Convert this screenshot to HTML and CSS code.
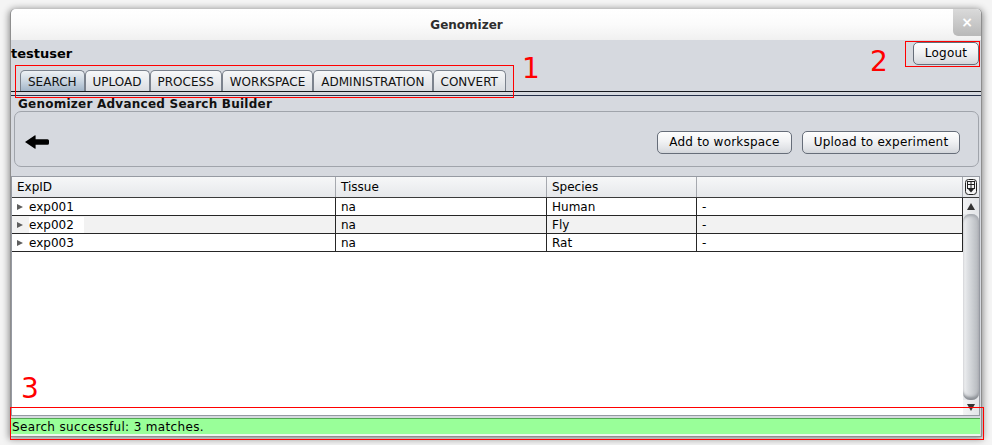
FILE: index.html
```html
<!DOCTYPE html>
<html>
<head>
<meta charset="utf-8">
<title>Genomizer</title>
<link rel="stylesheet" href="styles.css">
</head>
<body>
<div class="page">
  <div class="window">
    <div class="titlebar">
      <div class="title-wrap"><span class="title">Genomizer</span></div>
      <div class="close">×</div>
    </div>
    <div class="content">
      <div class="toprow">
        <span class="user">testuser</span>
        <button class="btn logout">Logout</button>
      </div>
      <div class="tabs">
        <div class="tab active">SEARCH</div>
        <div class="tab">UPLOAD</div>
        <div class="tab">PROCESS</div>
        <div class="tab">WORKSPACE</div>
        <div class="tab">ADMINISTRATION</div>
        <div class="tab">CONVERT</div>
      </div>
      <div class="tabline"></div>
      <div class="section-title">Genomizer Advanced Search Builder</div>
      <div class="panel">
        <svg class="back" width="24" height="14" viewBox="0 0 24 14">
          <path d="M0 7 L10 0.3 Q10.6 0 10.6 0.8 L10.6 4.3 L22.5 4.3 Q24 4.3 24 5.8 L24 8.2 Q24 9.7 22.5 9.7 L10.6 9.7 L10.6 13.2 Q10.6 14 10 13.7 Z" fill="#000"/>
        </svg>
        <div class="actions">
          <button class="btn add">Add to workspace</button>
          <button class="btn upload">Upload to experiment</button>
        </div>
      </div>
      <div class="scrollpane">
        <div class="table">
          <div class="row head">
            <div class="cell c1">ExpID</div>
            <div class="cell c2">Tissue</div>
            <div class="cell c3">Species</div>
            <div class="cell c4"></div>
          </div>
          <div class="row">
            <div class="cell c1"><span class="tri"></span><span class="id">exp001</span></div>
            <div class="cell c2">na</div>
            <div class="cell c3">Human</div>
            <div class="cell c4">-</div>
          </div>
          <div class="row alt">
            <div class="cell c1"><span class="tri"></span><span class="id hl">exp002</span></div>
            <div class="cell c2">na</div>
            <div class="cell c3">Fly</div>
            <div class="cell c4">-</div>
          </div>
          <div class="row">
            <div class="cell c1"><span class="tri"></span><span class="id">exp003</span></div>
            <div class="cell c2">na</div>
            <div class="cell c3">Rat</div>
            <div class="cell c4">-</div>
          </div>
        </div>
        <div class="vscroll">
          <div class="corner">
            <svg width="12" height="16" viewBox="0 0 12 16">
              <rect x="0.5" y="0.5" width="11" height="15" rx="3" fill="#f4f4f4" stroke="#222"/>
              <rect x="2.5" y="2.5" width="7" height="7" fill="none" stroke="#222"/>
              <path d="M6 2.5 V9.5 M2.5 5.5 H9.5" stroke="#222"/>
              <path d="M3 10 H9 L6 13.5 Z" fill="#222"/>
            </svg>
          </div>
          <div class="sbtn">
            <svg width="8" height="7" viewBox="0 0 8 7"><path d="M4 0 L8 7 H0 Z" fill="#333"/></svg>
          </div>
          <div class="thumb"></div>
          <div class="sbtn">
            <svg width="8" height="7" viewBox="0 0 8 7"><path d="M0 0 H8 L4 7 Z" fill="#333"/></svg>
          </div>
        </div>
      </div>
      <div class="status">Search successful: 3 matches.</div>
    </div>

    <div class="mark mark1"></div>
    <div class="mark mark2"></div>
    <div class="mark mark3"></div>
    <div class="num num1">1</div>
    <div class="num num2">2</div>
    <div class="num num3">3</div>
  </div>
</div>
</body>
</html>
```
FILE: styles.css
```css
* { box-sizing: border-box; }

html, body {
  margin: 0;
  padding: 0;
}

body {
  width: 992px;
  height: 445px;
  overflow: hidden;
  background: #f4f4f4;
  font-family: "DejaVu Sans", "Noto Sans", sans-serif;
  font-size: 12px;
  color: #000;
}

.page {
  padding: 9px 0 0 10px;
}

.window {
  position: relative;
  width: 972px;
  height: 428px;
  display: flex;
  flex-direction: column;
  background: #d6d9df;
  border: 1px solid #8e8e8e;
  border-top: none;
  border-radius: 5px 5px 0 0;
  box-shadow: 0 1px 7px 1px rgba(0, 0, 0, 0.45);
}

/* title bar */
.titlebar {
  height: 31px;
  display: flex;
  background: linear-gradient(#ffffff, #fbfbfb 50%, #f0f0f0);
  border-radius: 5px 5px 0 0;
}

.title-wrap {
  flex: 1;
  display: flex;
  justify-content: center;
  align-items: center;
  padding-right: 31px;
}

.title {
  font-weight: bold;
  font-size: 12px;
  color: #2e2e2e;
}

.close {
  width: 28px;
  height: 27px;
  background: linear-gradient(#dadada, #c6c6c6 60%, #b8b8b8);
  border-radius: 0 5px 0 5px;
  color: #fff;
  font-weight: bold;
  font-size: 14px;
  line-height: 27px;
  text-align: center;
}

/* content */
.content {
  flex: 1;
  display: flex;
  flex-direction: column;
}

.toprow {
  height: 28px;
  display: flex;
  justify-content: space-between;
  align-items: flex-start;
}

.user {
  font-weight: bold;
  font-size: 13px;
  line-height: 16px;
  padding-top: 6px;
}

.btn {
  font-family: "DejaVu Sans", "Noto Sans", sans-serif;
  font-size: 12px;
  letter-spacing: 0.2px;
  color: #000;
  height: 23px;
  padding: 0;
  text-align: center;
  line-height: 21px;
  border: 1px solid #666d79;
  border-radius: 5px;
  background: linear-gradient(#fefefe, #f1f2f4 45%, #e0e2e6 80%, #d2d5da);
}

.logout {
  width: 66px;
  margin-top: 2px;
  margin-right: 2px;
}

.tabs {
  display: flex;
  margin: 2px 0 0 9px;
  height: 21px;
}

.tab {
  height: 21px;
  padding: 2px 7px 0;
  line-height: 19px;
  border: 1px solid #7b828d;
  border-bottom: none;
  border-radius: 5px 5px 0 0;
  background: linear-gradient(#f7f8f9, #e9ebee 50%, #d9dce1);
  color: #111;
}

.tab.active {
  background: linear-gradient(#eef1f4, #cbd6e1 50%, #a2b5c8);
}

.tabline {
  height: 5px;
  border-top: 1px solid #15181e;
  border-bottom: 1px solid #26314a;
}

.section-title {
  height: 15px;
  padding-top: 1px;
  line-height: 14px;
  font-weight: bold;
  letter-spacing: 0.24px;
  padding-left: 7px;
  color: #111;
  white-space: nowrap;
}

.panel {
  width: 965px;
  height: 56px;
  margin-left: 3px;
  border: 1px solid #a0a4ab;
  border-radius: 7px;
  display: flex;
  align-items: center;
  justify-content: space-between;
  padding: 7px 18px 1px 10px;
}

.back {
  display: block;
}

.actions {
  display: flex;
  gap: 10px;
}

.add { width: 135px; }
.upload { width: 158px; }

/* table */
.scrollpane {
  width: 969px;
  height: 240px;
  margin-top: 9px;
  border: 1px solid #969aa2;
  display: flex;
  background: #fff;
}

.table {
  width: 951px;
  display: flex;
  flex-direction: column;
}

.row {
  display: flex;
  height: 18px;
  border-bottom: 1px solid #262626;
  background: #fff;
}

.row.alt {
  background: #f2f2f2;
}

.row.head {
  height: 21px;
  border-bottom: 1px solid #3a3a3a;
  background: linear-gradient(#f6f7f8, #e6e8eb);
}

.cell {
  display: flex;
  align-items: center;
  padding-left: 5px;
  padding-top: 1px;
  line-height: 16px;
  border-right: 1px solid #262626;
  white-space: nowrap;
}

.head .cell {
  padding-top: 0;
  line-height: 19px;
  border-right: 1px solid #a6a9af;
}

.c1 { width: 324px; }
.c2 { width: 211px; }
.c3 { width: 150px; }
.c4 { width: 266px; }

.tri {
  width: 0;
  height: 0;
  border-top: 3.5px solid transparent;
  border-bottom: 3.5px solid transparent;
  border-left: 6px solid #5e5e5e;
  margin-right: 6px;
}

.id.hl {
  background: #fff;
  padding-right: 10px;
}

/* scrollbar */
.vscroll {
  width: 16px;
  display: flex;
  flex-direction: column;
  background: #e6e8eb;
}

.corner {
  height: 21px;
  border-bottom: 1px solid #3a3a3a;
  background: linear-gradient(#f6f7f8, #e6e8eb);
  display: flex;
  justify-content: center;
  align-items: center;
}

.sbtn {
  height: 16px;
  display: flex;
  justify-content: center;
  align-items: center;
  background: linear-gradient(to right, #f3f4f5, #e2e4e7);
}

.sbtn:last-child {
  height: 15px;
}

.thumb {
  flex: 1;
  border-radius: 7px;
  background: linear-gradient(to right, #f4f5f6 0%, #e0e2e5 25%, #cbced2 60%, #b3b6bb 100%);
  box-shadow: inset 0 3px 3px -1px #a4a8ae, inset 0 -4px 3px -1px #8a8e94;
}

.status {
  width: 969px;
  height: 18px;
  margin-top: 2px;
  background: #99ff99;
  border-top: 1px solid #56a656;
  border-bottom: 2px solid #eef4ee;
  padding: 1px 0 0 1px;
  line-height: 14px;
  letter-spacing: 0.35px;
  white-space: nowrap;
}

/* annotations */
.mark {
  position: absolute;
  border: 1px solid #ff0000;
}

.mark1 { left: 4px; top: 56px; width: 499px; height: 33px; }
.mark2 { left: 894px; top: 32px; width: 75px; height: 26px; }
.mark3 { left: -1px; top: 398px; width: 974px; height: 33px; }

.num {
  position: absolute;
  color: #ff0000;
  font-size: 28px;
  line-height: 28px;
}

.num1 { left: 511px; top: 46px; }
.num2 { left: 859px; top: 39px; }
.num3 { left: 10px; top: 366px; }
```
